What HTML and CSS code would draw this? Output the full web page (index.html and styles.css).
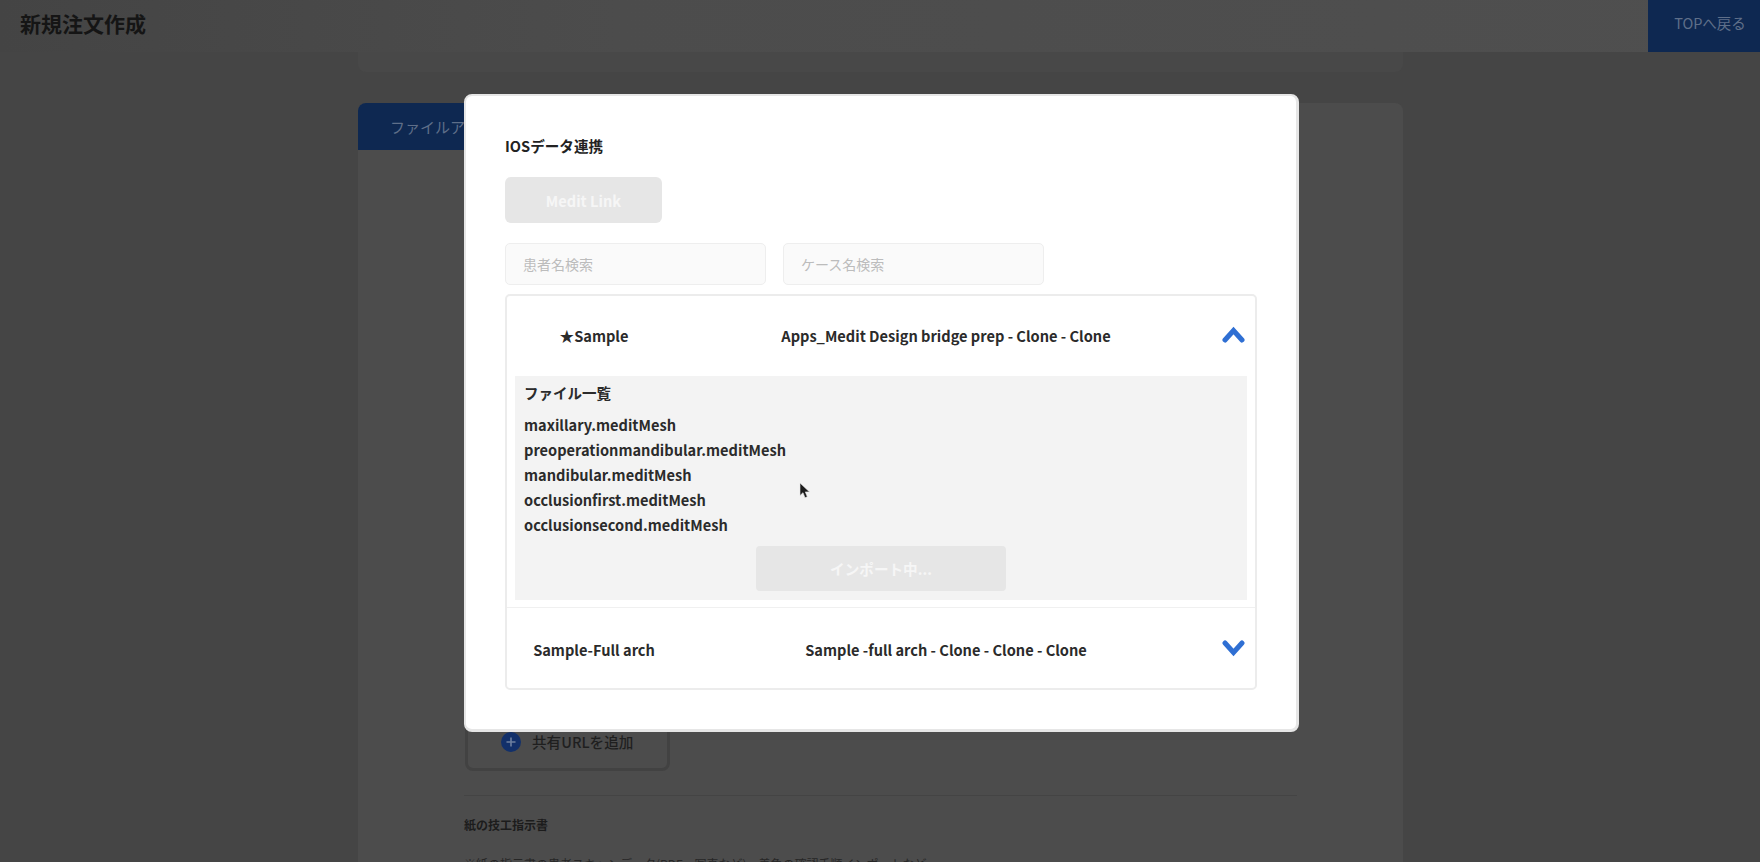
FILE: index.html
```html
<!DOCTYPE html>
<html lang="ja">
<head>
<meta charset="utf-8">
<title>新規注文作成</title>
<link rel="stylesheet" href="styles.css">
</head>
<body>
<div class="page">
  <header class="topbar">
    <h1 class="topbar-title">新規注文作成</h1>
    <a class="top-link">TOPへ戻る</a>
  </header>
  <main class="content">
    <div class="card card-stub"></div>
    <section class="card card-main">
      <div class="tab">ファイルアップロード</div>
      <div class="card-body">
        <div class="add-url">
          <svg class="plus" viewBox="0 0 20 20" width="20" height="20"><circle cx="10" cy="10" r="10" fill="#12306a"/><path d="M10 5.500v9M5.500 10h9" stroke="#6d7f9f" stroke-width="1.600"/></svg>
          <span>共有URLを追加</span>
        </div>
        <hr class="rule">
        <h2 class="sub-title">紙の技工指示書</h2>
        <p class="sub-note">※紙の指示書の患者スキャンデータ(PDF、写真など)、着色の確認手順インポートなど</p>
      </div>
    </section>
  </main>
</div>

<div class="modal">
  <h2 class="modal-title">IOSデータ連携</h2>
  <button class="btn btn-link">Medit Link</button>
  <div class="search-row">
    <div class="search">患者名検索</div>
    <div class="search">ケース名検索</div>
  </div>
  <div class="accordion">
    <div class="row row-first">
      <span class="cell">★Sample</span>
      <span class="cell">Apps_Medit Design bridge prep - Clone - Clone</span>
      <svg class="chev" viewBox="0 0 23 17" width="23" height="17"><path d="M3 14 11.500 4.500 20 14" fill="none" stroke="#2f6fd3" stroke-width="5" stroke-linecap="round"/></svg>
    </div>
    <div class="panel">
      <h3 class="panel-title">ファイル一覧</h3>
      <ul class="files">
        <li>maxillary.meditMesh</li>
        <li>preoperationmandibular.meditMesh</li>
        <li>mandibular.meditMesh</li>
        <li>occlusionfirst.meditMesh</li>
        <li>occlusionsecond.meditMesh</li>
      </ul>
      <button class="btn btn-import">インポート中...</button>
    </div>
    <div class="row row-last">
      <span class="cell">Sample-Full arch</span>
      <span class="cell">Sample -full arch - Clone - Clone - Clone</span>
      <svg class="chev" viewBox="0 0 23 17" width="23" height="17"><path d="M3 3 11.500 12.500 20 3" fill="none" stroke="#2f6fd3" stroke-width="5" stroke-linecap="round"/></svg>
    </div>
  </div>
</div>

<svg class="cursor" viewBox="0 0 11 18" width="11" height="18"><path d="M1 1v12.500l3-2.800 2 5 2.300-1-2-4.800h4.200z" fill="#1c1c1c" stroke="#e8e8e8" stroke-width=".6"/></svg>
</body>
</html>
```
FILE: styles.css
```css
* { box-sizing: border-box; }
html, body { margin: 0; height: 862px; overflow: hidden; }
body {
  background: #454545;
  color: #1b1b1b;
  font-family: "Noto Sans CJK JP", "Noto Sans", sans-serif;
  position: relative;
}
.page { display: flex; flex-direction: column; height: 862px; }
.topbar {
  height: 52px;
  flex: none;
  display: flex;
  align-items: center;
  justify-content: space-between;
  background: linear-gradient(90deg, #444444 0, #4c4c4c 35%, #4f4f4f 100%);
  padding-left: 20px;
}
.topbar-title { margin: 0 0 6px; font-size: 21px; font-weight: 700; color: #151515; line-height: 1; }
.top-link {
  width: 112px; height: 52px;
  padding: 0 0 7px 12px;
  display: flex; align-items: center; justify-content: center;
  background: #0e2851; color: #5f6f89; font-size: 14.500px;
}
.content { width: 1045px; margin-left: 358px; flex: 1; display: flex; flex-direction: column; gap: 31px; }
.card { background: #4c4c4c; }
.card-stub { height: 20px; border-radius: 0 0 8px 8px; flex: none; background: #484848; }
.card-main { flex: 1; border-radius: 8px 8px 0 0; }
.tab {
  width: 220px; height: 47px;
  padding-left: 32px;
  background: #0e2851;
  color: #5f6f89;
  font-size: 15px;
  line-height: 47px;
  border-radius: 8px 0 0 0;
  white-space: nowrap;
}
.card-body { padding: 0 106px; }
.add-url {
  margin: 521px 0 0 1px;
  width: 205px; height: 100px;
  padding: 58px 0 0 33px;
  display: flex; gap: 11px; align-items: flex-start;
  border: 3px solid #424242;
  border-radius: 8px;
  font-size: 14.600px; font-weight: 500; color: #1f1f1f;
  line-height: 20px;
}
.plus { flex: none; }
.rule { margin: 24px 0 0; border: 0; border-top: 1px solid #444444; }
.sub-title { margin: 19px 0 0; font-size: 12px; line-height: 20px; font-weight: 700; color: #1c1c1c; }
.sub-note { margin: 19px 0 0; font-size: 12px; line-height: 20px; color: #262626; white-space: nowrap; }

.modal {
  position: absolute;
  left: 464px; top: 94px;
  width: 835px; height: 638px;
  background: #fff;
  border: solid #e6e6e6;
  border-width: 2px 3px 3px 2px;
  border-radius: 8px;
  padding: 39px 39px 0 39px;
}
.modal-title { margin: 0; font-size: 14.600px; line-height: 22px; font-weight: 700; color: #222; }
.btn { display: block; border: 0; background: #e6e6e6; color: #f6f6f6; font-family: inherit; font-weight: 700; font-size: 14.600px; padding: 0; }
.btn-link { width: 157px; height: 46px; margin-top: 20px; border-radius: 6px; }
.search-row { display: flex; gap: 17px; margin-top: 20px; }
.search {
  width: 261px; height: 42px;
  padding-left: 17px;
  border: 1px solid #eeeeee;
  border-radius: 5px;
  background: #fafafa;
  color: #bcbcbc;
  font-size: 14px;
  line-height: 40px;
}
.accordion {
  margin-top: 9px;
  width: 752px; height: 396px;
  border: 2px solid #ececec;
  border-radius: 5px;
  display: flex; flex-direction: column;
}
.row {
  flex: none;
  display: grid;
  grid-template-columns: 174px 530px 24px;
  align-items: center;
  font-size: 14.600px;
  font-weight: 700;
  color: #2b2b2b;
}
.row-first { height: 78px; margin-bottom: 2px; }
.row-last { height: 79px; margin-top: 8px; padding-top: 4px; box-shadow: 0 -1px 0 #f0f0f0; }
.cell { text-align: center; white-space: nowrap; }
.chev { display: block; margin-left: 11px; margin-top: -2px; }
.panel { margin: 0 8px; height: 224px; background: #f3f3f3; padding: 3px 9px 0; flex: none; display: flex; flex-direction: column; }
.panel-title { margin: 0; font-size: 14.500px; line-height: 28px; font-weight: 700; color: #2b2b2b; }
.files { list-style: none; margin: 5px 0 0; padding: 0; font-size: 14.600px; font-weight: 700; line-height: 25px; color: #2b2b2b; }
.btn-import { width: 250px; height: 45px; margin: 9px auto 0; border-radius: 4px; }
.cursor { position: absolute; left: 799px; top: 482px; }
```
